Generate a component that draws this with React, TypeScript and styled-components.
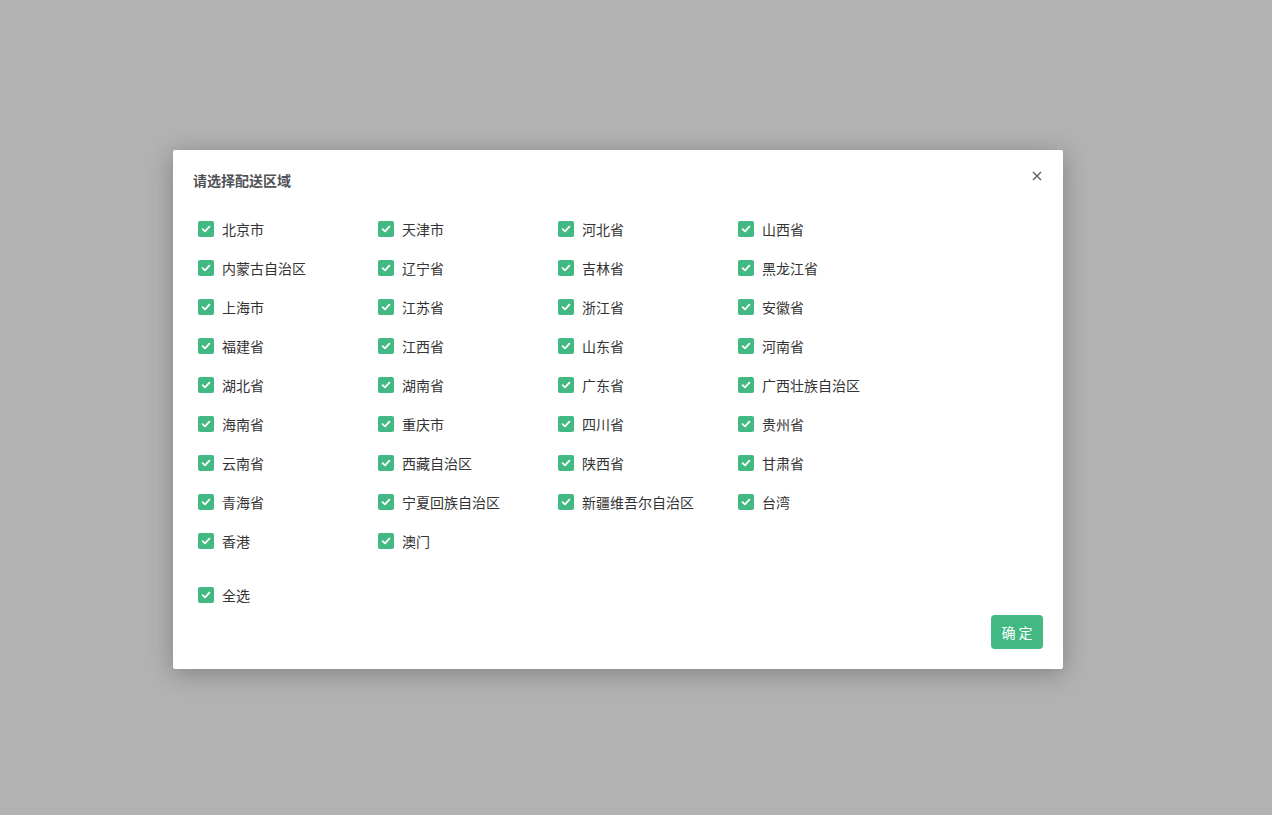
import React from "react";
import styled, { createGlobalStyle } from "styled-components";

const Global = createGlobalStyle`
  html, body { margin: 0; padding: 0; }
  body {
    background: #b2b2b2;
    font-family: "Noto Sans CJK SC", "Noto Sans", sans-serif;
    width: 1272px;
    height: 815px;
    overflow: hidden;
  }
`;

const Page = styled.div`
  padding: 150px 0 0 173px;
`;

const Modal = styled.div`
  width: 890px;
  height: 519px;
  box-sizing: border-box;
  background: #fff;
  border-radius: 2px;
  box-shadow: 0 4px 24px rgba(0, 0, 0, 0.28);
  position: relative;
  display: flex;
  flex-direction: column;
  padding: 20px 20px 20px 20px;
`;

const Header = styled.div`
  display: flex;
  align-items: center;
  justify-content: space-between;
  height: 20px;
`;

const Title = styled.div`
  font-size: 14px;
  font-weight: 700;
  color: #505356;
  line-height: 20px;
  margin-top: -1px;
`;

const Close = styled.button`
  border: 0;
  background: none;
  padding: 0;
  width: 12px;
  height: 12px;
  margin: -8px 0 0 0;
  display: flex;
  align-items: center;
  justify-content: center;
  cursor: pointer;
`;

const Grid = styled.div`
  display: grid;
  grid-template-columns: repeat(4, 180px);
  grid-auto-rows: 39px;
  margin-top: 19px;
  padding-left: 5px;
`;

const Item = styled.label`
  display: flex;
  align-items: center;
  gap: 8px;
  font-size: 14px;
  color: #333;
  cursor: pointer;
`;

const Box = styled.span`
  width: 16px;
  height: 16px;
  border-radius: 2px;
  background: #42b983;
  display: flex;
  align-items: center;
  justify-content: center;
  flex-shrink: 0;
`;

const AllRow = styled.div`
  margin-top: 15px;
  padding-left: 5px;
  height: 39px;
  display: flex;
  align-items: center;
`;

const Footer = styled.div`
  margin-top: auto;
  display: flex;
  justify-content: flex-end;
`;

const Confirm = styled.button`
  width: 52px;
  height: 34px;
  border: 0;
  border-radius: 4px;
  background: #42b983;
  color: #fff;
  font-size: 14px;
  font-family: inherit;
  padding: 0;
  cursor: pointer;
`;

const regions = [
  "北京市", "天津市", "河北省", "山西省",
  "内蒙古自治区", "辽宁省", "吉林省", "黑龙江省",
  "上海市", "江苏省", "浙江省", "安徽省",
  "福建省", "江西省", "山东省", "河南省",
  "湖北省", "湖南省", "广东省", "广西壮族自治区",
  "海南省", "重庆市", "四川省", "贵州省",
  "云南省", "西藏自治区", "陕西省", "甘肃省",
  "青海省", "宁夏回族自治区", "新疆维吾尔自治区", "台湾",
  "香港", "澳门",
];

const Check = () => (
  <Box>
    <svg width="10" height="10" viewBox="0 0 10 10">
      <path d="M1.6 5.2 L4 7.4 L8.4 2.6" fill="none" stroke="#fff" strokeWidth="1.8" strokeLinecap="round" strokeLinejoin="round" />
    </svg>
  </Box>
);

const Option = ({ label }: { label: string }) => (
  <Item>
    <Check />
    <span>{label}</span>
  </Item>
);

export default function App() {
  return (
    <>
      <Global />
      <Page>
        <Modal>
          <Header>
            <Title>请选择配送区域</Title>
            <Close aria-label="close">
              <svg width="10" height="10" viewBox="0 0 10 10">
                <path d="M1 1 L9 9 M9 1 L1 9" stroke="#555" strokeWidth="1.2" />
              </svg>
            </Close>
          </Header>
          <Grid>
            {regions.map((r) => (
              <Option key={r} label={r} />
            ))}
          </Grid>
          <AllRow>
            <Option label="全选" />
          </AllRow>
          <Footer>
            <Confirm>确 定</Confirm>
          </Footer>
        </Modal>
      </Page>
    </>
  );
}
